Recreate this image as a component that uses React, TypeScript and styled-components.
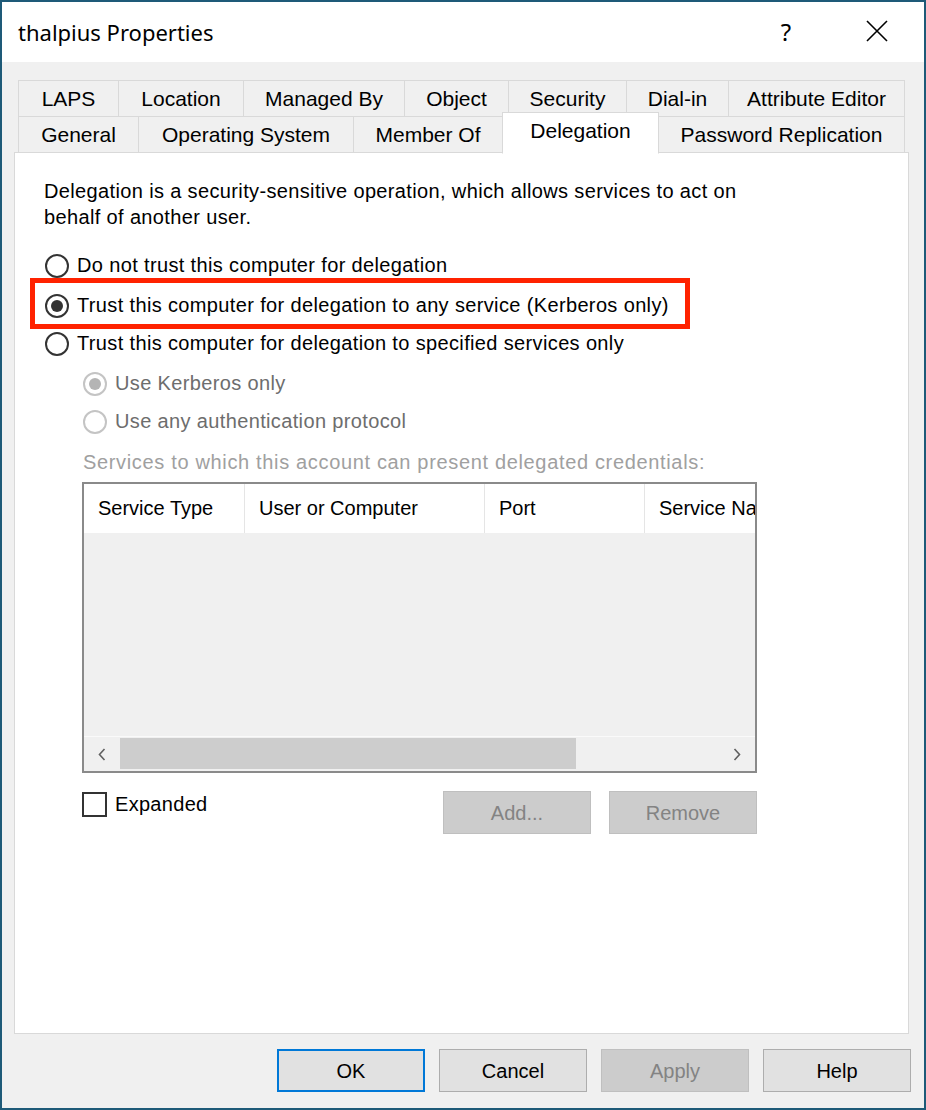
import React from 'react'
import styled, { createGlobalStyle } from 'styled-components'

const GlobalStyle = createGlobalStyle`
  html, body {
    margin: 0;
    padding: 0;
    background: #1e5a78;
  }
  body {
    font-family: 'Liberation Sans', Arial, sans-serif;
  }
  * {
    box-sizing: border-box;
  }
`

const topTabs = [
  { label: 'LAPS', width: 101 },
  { label: 'Location', width: 126 },
  { label: 'Managed By', width: 162 },
  { label: 'Object', width: 105 },
  { label: 'Security', width: 119 },
  { label: 'Dial-in', width: 103 },
  { label: 'Attribute Editor', width: 177 },
]

const bottomTabs = [
  { label: 'General', width: 121 },
  { label: 'Operating System', width: 216 },
  { label: 'Member Of', width: 150 },
  { label: 'Delegation', width: 157, active: true },
  { label: 'Password Replication', width: 247 },
]

const columns = [
  { label: 'Service Type', width: 161 },
  { label: 'User or Computer', width: 240 },
  { label: 'Port', width: 160 },
  { label: 'Service Name', width: 160 },
]

export default function App() {
  return (
    <>
      <GlobalStyle />
      <Window>
        <TitleBar>
          <Title>thalpius Properties</Title>
          <HelpButton>?</HelpButton>
          <CloseButton>
            <svg width="22" height="22" viewBox="0 0 22 22">
              <path d="M1 1 L21 21 M21 1 L1 21" stroke="#000" strokeWidth="1.6" fill="none" />
            </svg>
          </CloseButton>
        </TitleBar>

        <Body>
          <TabStrip>
            <TabRow>
              {topTabs.map((t) => (
                <Tab key={t.label} $width={t.width}>
                  {t.label}
                </Tab>
              ))}
            </TabRow>
            <TabRow>
              {bottomTabs.map((t) => (
                <Tab key={t.label} $width={t.width} $active={t.active}>
                  {t.label}
                </Tab>
              ))}
            </TabRow>
          </TabStrip>

          <Panel>
            <Description>
              Delegation is a security-sensitive operation, which allows services to act on
              <br />
              behalf of another user.
            </Description>

            <Options>
              <RadioRow>
                <Radio />
                Do not trust this computer for delegation
              </RadioRow>
              <Highlight>
                <RadioRow>
                  <Radio $checked />
                  Trust this computer for delegation to any service (Kerberos only)
                </RadioRow>
              </Highlight>
              <RadioRow>
                <Radio />
                Trust this computer for delegation to specified services only
              </RadioRow>
              <SubOptions>
                <RadioRow $disabled>
                  <Radio $checked $disabled />
                  Use Kerberos only
                </RadioRow>
                <RadioRow $disabled>
                  <Radio $disabled />
                  Use any authentication protocol
                </RadioRow>
              </SubOptions>
            </Options>

            <ListLabel>Services to which this account can present delegated credentials:</ListLabel>

            <ListView>
              <ListHeader>
                {columns.map((c) => (
                  <HeaderCell key={c.label} $width={c.width}>
                    {c.label}
                  </HeaderCell>
                ))}
              </ListHeader>
              <ListBody />
              <ScrollBar>
                <ScrollArrow>
                  <svg width="8" height="13" viewBox="0 0 8 13">
                    <path d="M6.5 1 L1.5 6.5 L6.5 12" stroke="#606060" strokeWidth="1.6" fill="none" />
                  </svg>
                </ScrollArrow>
                <ScrollTrack>
                  <ScrollThumb />
                </ScrollTrack>
                <ScrollArrow>
                  <svg width="8" height="13" viewBox="0 0 8 13">
                    <path d="M1.5 1 L6.5 6.5 L1.5 12" stroke="#606060" strokeWidth="1.6" fill="none" />
                  </svg>
                </ScrollArrow>
              </ScrollBar>
            </ListView>

            <ListActions>
              <CheckLabel>
                <CheckBox />
                Expanded
              </CheckLabel>
              <ActionButtons>
                <Button $disabled>Add...</Button>
                <Button $disabled>Remove</Button>
              </ActionButtons>
            </ListActions>
          </Panel>

          <Footer>
            <Button $default>OK</Button>
            <Button>Cancel</Button>
            <Button $disabled>Apply</Button>
            <Button>Help</Button>
          </Footer>
        </Body>
      </Window>
    </>
  )
}

const Window = styled.div`
  width: 926px;
  height: 1110px;
  border: 2px solid #1e5a78;
  background: #f0f0f0;
  display: flex;
  flex-direction: column;
`

const TitleBar = styled.div`
  height: 60px;
  background: #fff;
  display: flex;
  align-items: center;
  padding-left: 16px;
`

const Title = styled.div`
  flex: 1;
  font-family: 'Noto Sans', 'Open Sans', sans-serif;
  font-size: 22px;
  color: #000;
`

const HelpButton = styled.div`
  width: 66px;
  margin-right: 11px;
  text-align: center;
  font-family: 'Noto Sans', sans-serif;
  font-size: 24px;
  color: #000;
  padding-bottom: 2px;
`

const CloseButton = styled.div`
  width: 94px;
  height: 100%;
  display: flex;
  align-items: center;
  justify-content: center;
  padding-bottom: 2px;
`

const Body = styled.div`
  flex: 1;
  display: flex;
  flex-direction: column;
  padding: 18px 13px 16px 12px;
`

const TabStrip = styled.div`
  margin: 0 4px 0 4px;
  display: flex;
  flex-direction: column;
`

const TabRow = styled.div`
  display: flex;
  align-items: flex-start;
  & + & {
    margin-top: -1px;
  }
`

const Tab = styled.div<{ $width: number; $active?: boolean }>`
  width: ${(p) => p.$width}px;
  height: ${(p) => (p.$active ? 42 : 37)}px;
  margin-top: ${(p) => (p.$active ? -4 : 0)}px;
  margin-bottom: ${(p) => (p.$active ? -1 : 0)}px;
  position: relative;
  z-index: ${(p) => (p.$active ? 2 : 0)};
  background: ${(p) => (p.$active ? '#fff' : '#f0f0f0')};
  border: 1px solid #d9d9d9;
  border-bottom-color: ${(p) => (p.$active ? '#fff' : '#d9d9d9')};
  display: flex;
  justify-content: center;
  align-items: center;
  padding-bottom: ${(p) => (p.$active ? 4 : 0)}px;
  font-size: 21px;
  color: #000;
  white-space: nowrap;
  & + & {
    margin-left: -1px;
  }
`

const Panel = styled.div`
  margin-top: -1px;
  margin-right: 2px;
  height: 882px;
  background: #fff;
  border: 1px solid #d9d9d9;
  padding: 25px 0 0 30px;
  font-size: 20px;
  letter-spacing: 0.36px;
  color: #000;
`

const Description = styled.div`
  line-height: 26px;
  margin-left: -1px;
`

const Options = styled.div`
  margin-top: 16px;
  display: flex;
  flex-direction: column;
`

const RadioRow = styled.div<{ $disabled?: boolean }>`
  height: 39px;
  display: flex;
  align-items: center;
  gap: 8px;
  white-space: nowrap;
  color: ${(p) => (p.$disabled ? '#6d6d6d' : '#000')};
`

const Radio = styled.span<{ $checked?: boolean; $disabled?: boolean }>`
  width: 24px;
  height: 24px;
  flex: none;
  border-radius: 50%;
  border: 2px solid ${(p) => (p.$disabled ? '#c4c4c4' : '#333')};
  background: #fff;
  display: flex;
  align-items: center;
  justify-content: center;
  &::after {
    content: '';
    display: ${(p) => (p.$checked ? 'block' : 'none')};
    width: 12px;
    height: 12px;
    border-radius: 50%;
    background: ${(p) => (p.$disabled ? '#b4b4b4' : '#333')};
  }
`

const Highlight = styled.div`
  width: 660px;
  margin: -7px 0 -5px -15px;
  padding: 4px 0 0 10px;
  border: 5px solid #ff2200;
  & > div {
    height: 37px;
  }
`

const SubOptions = styled.div`
  margin-left: 38px;
  display: flex;
  flex-direction: column;
  & > div:first-child {
    padding-top: 2px;
  }
`

const ListLabel = styled.div`
  margin: 8px 0 0 38px;
  line-height: 26px;
  color: #a0a0a0;
  letter-spacing: 0.66px;
  white-space: nowrap;
`

const ListView = styled.div`
  margin: 7px 0 0 37px;
  width: 675px;
  height: 291px;
  border: 2px solid #8a8a8a;
  background: #f0f0f0;
  display: flex;
  flex-direction: column;
  overflow: hidden;
`

const ListHeader = styled.div`
  height: 49px;
  background: #fff;
  display: flex;
  flex: none;
  overflow: hidden;
`

const HeaderCell = styled.div<{ $width: number }>`
  width: ${(p) => p.$width}px;
  flex: none;
  border-right: 1px solid #e5e5e5;
  padding-left: 14px;
  display: flex;
  align-items: center;
  white-space: nowrap;
  letter-spacing: 0;
  color: #000;
`

const ListBody = styled.div`
  flex: 1;
`

const ScrollBar = styled.div`
  height: 35px;
  flex: none;
  border-top: 1px solid #fafafa;
  display: flex;
  align-items: center;
`

const ScrollArrow = styled.div`
  width: 36px;
  height: 100%;
  display: flex;
  align-items: center;
  justify-content: center;
`

const ScrollTrack = styled.div`
  flex: 1;
  height: 100%;
  padding: 1px 0 2px;
`

const ScrollThumb = styled.div`
  width: 456px;
  height: 100%;
  background: #cdcdcd;
`

const ListActions = styled.div`
  margin: 18px 0 0 37px;
  width: 675px;
  display: flex;
  align-items: flex-start;
`

const CheckLabel = styled.div`
  margin-top: 1px;
  display: flex;
  align-items: center;
  gap: 8px;
  letter-spacing: 0.3px;
`

const CheckBox = styled.span`
  width: 25px;
  height: 25px;
  border: 2px solid #333;
  background: #fff;
`

const ActionButtons = styled.div`
  margin-left: auto;
  display: flex;
  gap: 18px;
`

const Button = styled.div<{ $disabled?: boolean; $default?: boolean }>`
  width: 148px;
  height: 43px;
  display: flex;
  align-items: center;
  justify-content: center;
  padding-top: 2px;
  font-family: 'Liberation Sans', Arial, sans-serif;
  font-size: 20px;
  letter-spacing: 0;
  background: ${(p) => (p.$disabled ? '#cccccc' : '#e1e1e1')};
  color: ${(p) => (p.$disabled ? '#838383' : '#000')};
  border: ${(p) => (p.$default ? '2px solid #0078d7' : p.$disabled ? '1px solid #bfbfbf' : '1px solid #adadad')};
`

const Footer = styled.div`
  margin-top: 15px;
  display: flex;
  justify-content: flex-end;
  gap: 14px;
`
